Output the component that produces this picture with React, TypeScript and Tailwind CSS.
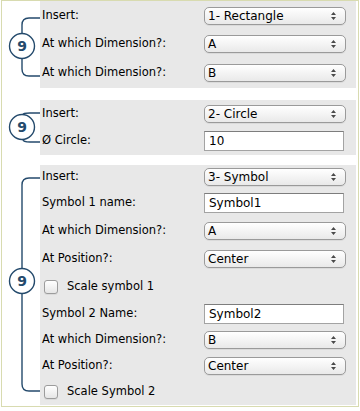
import React from "react";

type Row =
  | { kind: "select"; label: string; value: string; h: number }
  | { kind: "input"; label: string; value: string; h: number }
  | { kind: "check"; label: string; h: number };

type Group = {
  rows: Row[];
  top: number; // bracket top line, relative to panel
  bottom: number; // bracket bottom line
  cy: number; // badge centre
};

const font = { fontFamily: '"DejaVu Sans", Verdana, sans-serif' };

function Select({ value }: { value: string }) {
  return (
    <div className="relative flex h-[18px] w-[142px] items-center rounded-[5px] border border-[#9a9a9a] bg-linear-to-b from-white to-[#e9e9e9] pl-[3px] text-[12px] text-black shadow-[0_1px_0_rgba(0,0,0,0.06)]">
      <span>{value}</span>
      <svg
        className="absolute right-[9px] top-1/2 -translate-y-1/2"
        width="5"
        height="9"
        viewBox="0 0 5 9"
      >
        <path d="M0 3.5 L2.5 0.5 L5 3.5Z M0 5.5 L2.5 8.5 L5 5.5Z" fill="#4a4a4a" />
      </svg>
    </div>
  );
}

function TextInput({ value }: { value: string }) {
  return (
    <div className="flex h-[20px] w-[140px] items-center border border-[#a3a3a3] border-t-[#7d7d7d] bg-white pl-[4px] text-[12px] text-black">
      {value}
    </div>
  );
}

function Checkbox() {
  return (
    <span className="h-[14px] w-[14px] rounded-[3px] border border-[#9c9c9c] bg-linear-to-b from-white to-[#e6e6e6] shadow-[0_1px_0_rgba(0,0,0,0.06)]" />
  );
}

function Bracket({ height, top, bottom, cy }: { height: number; top: number; bottom: number; cy: number }) {
  const x = 20;
  const R = 12.5;
  const r = 7;
  const c1 = cy - R;
  const c2 = cy + R;
  const upper =
    c1 - top >= r
      ? `M38 ${top} H${x + r} Q${x} ${top} ${x} ${top + r} V${c1}`
      : `M38 ${top} H${x + 8} Q${x + 1} ${top} ${x + 1} ${c1}`;
  const lower =
    bottom - c2 >= r
      ? `M${x} ${c2} V${bottom - r} Q${x} ${bottom} ${x + r} ${bottom} H38`
      : `M${x + 1} ${c2} Q${x + 1} ${bottom} ${x + 8} ${bottom} H38`;
  return (
    <svg width="38" height={height} viewBox={`0 0 38 ${height}`} className="shrink-0">
      <path d={upper} fill="none" stroke="#244a6c" strokeWidth="1.4" />
      <path d={lower} fill="none" stroke="#244a6c" strokeWidth="1.4" />
      <circle cx={x} cy={cy} r={R} fill="white" stroke="#244a6c" strokeWidth="1.4" />
      <text
        x={x}
        y={cy + 5}
        textAnchor="middle"
        fontSize="14"
        fontWeight="bold"
        fill="#244a6c"
        fontFamily='"DejaVu Sans", Verdana, sans-serif'
      >
        9
      </text>
    </svg>
  );
}

const groups: Group[] = [
  {
    rows: [
      { kind: "select", label: "Insert:", value: "1- Rectangle", h: 29 },
      { kind: "select", label: "At which Dimension?:", value: "A", h: 28 },
      { kind: "select", label: "At which Dimension?:", value: "B", h: 30 },
    ],
    top: 17,
    bottom: 75,
    cy: 45,
  },
  {
    rows: [
      { kind: "select", label: "Insert:", value: "2- Circle", h: 27 },
      { kind: "input", label: "Ø Circle:", value: "10", h: 28 },
    ],
    top: 13,
    bottom: 42,
    cy: 27,
  },
  {
    rows: [
      { kind: "select", label: "Insert:", value: "3- Symbol", h: 24 },
      { kind: "input", label: "Symbol 1 name:", value: "Symbol1", h: 28 },
      { kind: "select", label: "At which Dimension?:", value: "A", h: 28 },
      { kind: "select", label: "At Position?:", value: "Center", h: 28 },
      { kind: "check", label: "Scale symbol 1", h: 28 },
      { kind: "input", label: "Symbol 2 Name:", value: "Symbol2", h: 26 },
      { kind: "select", label: "At which Dimension?:", value: "B", h: 26 },
      { kind: "select", label: "At Position?:", value: "Center", h: 26 },
      { kind: "check", label: "Scale Symbol 2", h: 26 },
    ],
    top: 13,
    bottom: 226,
    cy: 116,
  },
];

function Panel({ group }: { group: Group }) {
  const height = group.rows.reduce((s, r) => s + r.h, 0);
  return (
    <div className="flex">
      <Bracket height={height} top={group.top} bottom={group.bottom} cy={group.cy} />
      <div className="flex-1 bg-[#e8e8e8]">
        {group.rows.map((row, i) => (
          <div key={i} className="flex items-center" style={{ height: row.h }}>
            {row.kind === "check" ? (
              <div className="flex items-center gap-[9px] pl-[4px] text-[11.5px] text-black">
                <Checkbox />
                <span>{row.label}</span>
              </div>
            ) : (
              <>
                <div className="w-[164px] shrink-0 pl-[2px] text-[11.5px] text-black">{row.label}</div>
                {row.kind === "select" ? <Select value={row.value} /> : <TextInput value={row.value} />}
              </>
            )}
          </div>
        ))}
      </div>
    </div>
  );
}

export default function App() {
  return (
    <div className="h-[411px] w-[360px] bg-white" style={font}>
      <div className="ml-[1px] w-[358px] border border-[#d8dbb0] pr-[2px]">
        <div className="pt-0">
          <Panel group={groups[0]} />
        </div>
        <div className="mt-[12px]">
          <Panel group={groups[1]} />
        </div>
        <div className="mt-[10px] pb-[1px]">
          <Panel group={groups[2]} />
        </div>
      </div>
    </div>
  );
}
